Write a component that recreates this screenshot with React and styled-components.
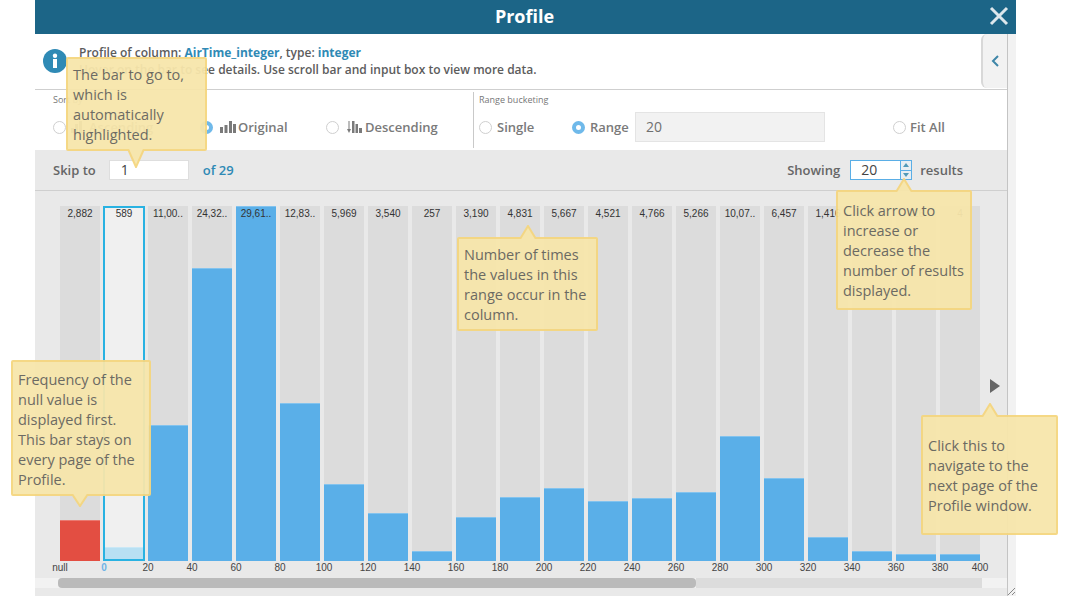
import React from 'react'
import styled, { createGlobalStyle } from 'styled-components'

const GlobalStyle = createGlobalStyle`
  html, body {
    margin: 0;
    padding: 0;
    background: #fff;
    overflow: hidden;
  }
  body {
    font-family: "Open Sans", "Liberation Sans", sans-serif;
    color: #666;
  }
`

const Page = styled.div`
  position: relative;
  width: 1070px;
  height: 596px;
  overflow: hidden;
`

const Dialog = styled.div`
  width: 981px;
  margin-left: 35px;
  height: 596px;
  display: flex;
  flex-direction: column;
  background: #f2f2f2;
`

const Header = styled.header`
  position: relative;
  flex: none;
  height: 34px;
  box-sizing: border-box;
  padding: 0 2px 2px 0;
  background: #1c6587;
  color: #fff;
  display: flex;
  align-items: center;
  justify-content: center;
  font-size: 18px;
  font-weight: 700;
`

const CloseButton = styled.button`
  position: absolute;
  right: 7px;
  top: 6px;
  width: 20px;
  height: 20px;
  padding: 0;
  border: 0;
  background: none;
  display: flex;
`

const Content = styled.main`
  flex: 1;
  width: 973px;
  box-sizing: border-box;
  border-right: 1px solid #c4c4c4;
  display: flex;
  flex-direction: column;
  background: #e9e9e9;
  position: relative;
`

const InfoRow = styled.section`
  position: relative;
  flex: none;
  height: 56px;
  box-sizing: border-box;
  border-bottom: 1px solid #cfcfcf;
  background: #fff;
  display: flex;
  align-items: center;
  padding: 0 0 2px 8px;
`

const InfoBadge = styled.svg`
  flex: none;
  margin-right: 12px;
`

const InfoText = styled.div`
  font-size: 12px;
  line-height: 17px;
  font-weight: 600;
  color: #5c5c5c;
`

const Strong = styled.span`
  color: #2f8ab5;
  font-weight: 700;
`

const CollapseTab = styled.div`
  position: absolute;
  right: 0;
  top: 0;
  width: 26px;
  height: 54px;
  box-sizing: border-box;
  background: #f2f2f2;
  border-left: 2px solid #d8d8d8;
  border-radius: 6px 0 0 6px;
  display: flex;
  align-items: center;
  justify-content: center;
`

const OptionsRow = styled.section`
  flex: none;
  height: 60px;
  box-sizing: border-box;
  background: #fff;
  display: flex;
  padding: 2px 0 2px 18px;
`

const SortGroup = styled.div`
  width: 421px;
  box-sizing: border-box;
  border-right: 1px solid #c9c9c9;
`

const RangeGroup = styled.div`
  padding-left: 5px;
`

const GroupLabel = styled.div`
  font-size: 9px;
  line-height: 12px;
  height: 17px;
  padding-top: 2px;
  box-sizing: border-box;
  color: #777;
`

const OptionLine = styled.div`
  display: flex;
  align-items: center;
  height: 30px;
  margin-top: 3px;
`

const RadioItem = styled.label`
  display: flex;
  align-items: center;
  width: ${p => p.$width}px;
  font-size: 13px;
  font-weight: 600;
  color: #7a7a7a;
`

const Radio = styled.span`
  flex: none;
  width: 13px;
  height: 13px;
  box-sizing: border-box;
  border-radius: 50%;
  background: #fff;
  border: ${p => (p.$on ? '4px solid #6fb9ea' : '1px solid #cfcfcf')};
  margin-right: ${p => p.$gap || 5}px;
`

const BarsIcon = styled.svg`
  flex: none;
  margin-right: 2px;
`

const RangeInput = styled.div`
  width: 190px;
  height: 30px;
  box-sizing: border-box;
  background: #f2f2f2;
  border: 1px solid #e4e4e4;
  margin: 0 68px 0 6px;
  padding-left: 10px;
  font-size: 14px;
  line-height: 28px;
  color: #707070;
`

const Toolbar = styled.section`
  flex: none;
  height: 41px;
  box-sizing: border-box;
  border-bottom: 1px solid #cfcfcf;
  display: flex;
  align-items: center;
  padding: 0 44px 0 18px;
  font-size: 13px;
  font-weight: 600;
  color: #666;
`

const SkipInput = styled.div`
  width: 80px;
  height: 20px;
  box-sizing: border-box;
  background: #fff;
  border: 1px solid #dedede;
  margin: 0 14px 0 13px;
  padding-left: 11px;
  font-size: 14px;
  font-weight: 400;
  line-height: 18px;
  color: #444;
`

const OfTotal = styled.span`
  color: #2f8ab5;
  flex: 1;
`

const ShowingInput = styled.div`
  width: 62px;
  height: 20px;
  box-sizing: border-box;
  background: #fff;
  border: 1px solid #5aaee6;
  margin: 0 8px 0 10px;
  padding-left: 10px;
  font-size: 14px;
  font-weight: 400;
  line-height: 18px;
  color: #444;
  display: flex;
  justify-content: space-between;
`

const Spinner = styled.div`
  width: 10px;
  border-left: 1px solid #5aaee6;
  display: flex;
  flex-direction: column;
  background: #e8eef2;
`

const SpinButton = styled.div`
  flex: 1;
  display: flex;
  align-items: center;
  justify-content: center;
  & + & {
    border-top: 1px solid #5aaee6;
  }
  &::before {
    content: '';
    border-left: 3.5px solid transparent;
    border-right: 3.5px solid transparent;
    ${p => (p.$down ? 'border-top' : 'border-bottom')}: 4px solid #5199b8;
  }
`

const ChartArea = styled.section`
  flex: none;
  height: 387px;
  box-sizing: border-box;
  padding: 15px 0 0 25px;
  display: flex;
  flex-direction: column;
`

const Plot = styled.div`
  display: flex;
  align-items: center;
  height: 355px;
`

const Columns = styled.div`
  display: flex;
  gap: 4px;
  height: 100%;
`

const Column = styled.div`
  position: relative;
  width: ${p => (p.$selected ? 42 : 40)}px;
  margin: ${p => (p.$selected ? '0 -1px' : '0')};
  box-sizing: border-box;
  background: ${p => (p.$selected ? '#f0f0f0' : '#dcdcdc')};
  border: ${p => (p.$selected ? '2px solid #29b2e2' : '0')};
  display: flex;
  flex-direction: column;
  justify-content: flex-end;
`

// sits on top of the bar, the tallest bar fills the whole column
const Count = styled.div`
  position: absolute;
  left: 0;
  right: 0;
  top: ${p => (p.$selected ? -1 : 1)}px;
  font-family: "Liberation Sans", Arial, sans-serif;
  font-size: 10px;
  line-height: 14px;
  color: #333;
  text-align: center;
  white-space: nowrap;
`

const Fill = styled.div`
  background: ${p => p.$color};
  box-shadow: inset 0 1px 0 rgba(255, 255, 255, 0.25);
`

const NextArrow = styled.div`
  margin: 5px 0 0 10px;
  border-left: 10px solid #666;
  border-top: 7.5px solid transparent;
  border-bottom: 7.5px solid transparent;
`

const Axis = styled.div`
  display: flex;
  margin-left: -22px;
  height: 12px;
  padding-top: 1px;
`

const Tick = styled.div`
  flex: none;
  width: 44px;
  margin-left: ${p => (p.$last ? -4 : 0)}px;
  text-align: center;
  font-family: "Liberation Sans", Arial, sans-serif;
  font-size: 10px;
  line-height: 12px;
  color: ${p => (p.$active ? '#6fb3e6' : '#444')};
  font-weight: ${p => (p.$active ? 700 : 400)};
`

const ScrollRail = styled.div`
  flex: none;
  height: 10px;
  background: #f2f2f2;
  display: flex;
`

const ScrollStart = styled.div`
  width: 23px;
`

const ScrollThumb = styled.div`
  width: 638px;
  background: #bababa;
  border-radius: 4px;
`

const ScrollRest = styled.div`
  width: 286px;
  background: #dcdcdc;
`

const Tooltip = styled.div`
  position: absolute;
  left: ${p => p.$x}px;
  top: ${p => p.$y}px;
  width: ${p => p.$w}px;
  height: ${p => p.$h}px;
  box-sizing: border-box;
  padding: ${p => p.$pad || '6px 5px'};
  background: #f7e6ab;
  border: 2px solid #f5d67f;
  border-radius: 2px;
  opacity: 0.95;
  font-size: 14.5px;
  line-height: 20px;
  color: #66645c;
  white-space: nowrap;
`

const Caret = styled.svg`
  position: absolute;
  left: ${p => p.$x}px;
  ${p => (p.$down ? `bottom: ${-p.$size}px;` : `top: ${-p.$size}px;`)}
  transform: ${p => (p.$down ? 'scaleY(-1)' : 'none')};
`

const ResizeGrip = styled.svg`
  position: absolute;
  left: 1007px;
  top: 587px;
`

const bars = [
  { count: '2,882', height: 41, color: '#e34e42' },
  { count: '589', height: 12, color: '#b8e0f3', selected: true },
  { count: '11,00..', height: 136 },
  { count: '24,32..', height: 293 },
  { count: '29,61..', height: 355 },
  { count: '12,83..', height: 158 },
  { count: '5,969', height: 77 },
  { count: '3,540', height: 48 },
  { count: '257', height: 10 },
  { count: '3,190', height: 44 },
  { count: '4,831', height: 64 },
  { count: '5,667', height: 73 },
  { count: '4,521', height: 60 },
  { count: '4,766', height: 63 },
  { count: '5,266', height: 69 },
  { count: '10,07..', height: 125 },
  { count: '6,457', height: 83 },
  { count: '1,416', height: 24 },
  { count: '257', height: 10 },
  { count: '126', height: 7 },
  { count: '4', height: 7 },
]

const ticks = ['null', '0']
for (let v = 20; v <= 400; v += 20) ticks.push(String(v))

const tooltips = [
  { x: 66, y: 57, w: 141, h: 94, caret: 59, size: 19, down: true, text: ['The bar to go to,', 'which is', 'automatically', 'highlighted.'] },
  { x: 457, y: 237, w: 141, h: 94, caret: 60, size: 14, text: ['Number of times', 'the values in this', 'range occur in the', 'column.'] },
  { x: 836, y: 190, w: 136, h: 120, caret: 57, size: 14, pad: '9px 5px', text: ['Click arrow to', 'increase or', 'decrease the', 'number of results', 'displayed.'] },
  { x: 921, y: 415, w: 137, h: 120, caret: 58, size: 14, pad: '19px 5px', text: ['Click this to', 'navigate to the', 'next page of the', 'Profile window.'] },
  { x: 11, y: 360, w: 140, h: 136, caret: 58, size: 13, down: true, pad: '8px 5px', text: ['Frequency of the', 'null value is', 'displayed first.', 'This bar stays on', 'every page of the', 'Profile.'] },
]

const OriginalIcon = () => (
  <BarsIcon width="16" height="12" viewBox="0 0 16 12" fill="#7a7a7a">
    <rect x="0" y="6" width="3" height="6" />
    <rect x="4.5" y="4" width="3" height="8" />
    <rect x="9" y="0" width="3" height="12" />
    <rect x="13" y="3" width="3" height="9" />
  </BarsIcon>
)

const DescendingIcon = () => (
  <BarsIcon width="16" height="12" viewBox="0 0 16 12" fill="#7a7a7a">
    <path d="M1.5 0h1v8h1.5L2 12 0 8h1.5z" />
    <rect x="5" y="0" width="2.5" height="12" />
    <rect x="8.5" y="3" width="2.5" height="9" />
    <rect x="12" y="7" width="3" height="5" />
  </BarsIcon>
)

const AscendingIcon = () => (
  <BarsIcon width="16" height="12" viewBox="0 0 16 12" fill="#7a7a7a">
    <rect x="0" y="7" width="3" height="5" />
    <rect x="4" y="3" width="3" height="9" />
    <rect x="8" y="0" width="3" height="12" />
  </BarsIcon>
)

const App = () => (
  <Page>
    <GlobalStyle />
    <Dialog>
      <Header>
        Profile
        <CloseButton aria-label="Close">
          <svg width="20" height="20" viewBox="0 0 20 20">
            <path d="M2 2l16 16M18 2L2 18" stroke="#dde7ec" strokeWidth="3" fill="none" />
          </svg>
        </CloseButton>
      </Header>
      <Content>
        <InfoRow>
          <InfoBadge width="24" height="24" viewBox="0 0 24 24">
            <circle cx="12" cy="12" r="12" fill="#2f8ab5" />
            <rect x="10" y="10" width="4" height="9" fill="#fff" />
            <circle cx="12" cy="6.8" r="2.2" fill="#fff" />
          </InfoBadge>
          <InfoText>
            <div>
              Profile of column: <Strong>AirTime_integer</Strong>, type: <Strong>integer</Strong>
            </div>
            <div>Hover on the bar to see details. Use scroll bar and input box to view more data.</div>
          </InfoText>
          <CollapseTab>
            <svg width="9" height="14" viewBox="0 0 9 14">
              <path d="M7 2L2 7l5 5" stroke="#3f86a8" strokeWidth="2" fill="none" />
            </svg>
          </CollapseTab>
        </InfoRow>
        <OptionsRow>
          <SortGroup>
            <GroupLabel>Sort by</GroupLabel>
            <OptionLine>
              <RadioItem $width={147}>
                <Radio />
                <AscendingIcon />
                Ascending
              </RadioItem>
              <RadioItem $width={126}>
                <Radio $on $gap={7} />
                <OriginalIcon />
                Original
              </RadioItem>
              <RadioItem $width={120}>
                <Radio $gap={8} />
                <DescendingIcon />
                Descending
              </RadioItem>
            </OptionLine>
          </SortGroup>
          <RangeGroup>
            <GroupLabel>Range bucketing</GroupLabel>
            <OptionLine>
              <RadioItem $width={93}>
                <Radio />
                Single
              </RadioItem>
              <RadioItem $width={57}>
                <Radio $on />
                Range
              </RadioItem>
              <RangeInput>20</RangeInput>
              <RadioItem $width={60}>
                <Radio $gap={4} />
                Fit All
              </RadioItem>
            </OptionLine>
          </RangeGroup>
        </OptionsRow>
        <Toolbar>
          <span>Skip to</span>
          <SkipInput>1</SkipInput>
          <OfTotal>of 29</OfTotal>
          <span>Showing</span>
          <ShowingInput>
            20
            <Spinner>
              <SpinButton />
              <SpinButton $down />
            </Spinner>
          </ShowingInput>
          <span>results</span>
        </Toolbar>
        <ChartArea>
          <Plot>
            <Columns>
              {bars.map((bar, i) => (
                <Column key={i} $selected={bar.selected}>
                  <Count $selected={bar.selected}>{bar.count}</Count>
                  <Fill $color={bar.color || '#5aafe8'} style={{ height: bar.height }} />
                </Column>
              ))}
            </Columns>
            <NextArrow />
          </Plot>
          <Axis>
            {ticks.map((t, i) => (
              <Tick key={t} $active={t === '0'} $last={i === ticks.length - 1}>
                {t}
              </Tick>
            ))}
          </Axis>
        </ChartArea>
        <ScrollRail>
          <ScrollStart />
          <ScrollThumb />
          <ScrollRest />
        </ScrollRail>
      </Content>
    </Dialog>
    {tooltips.map(tip => (
      <Tooltip key={tip.x} $x={tip.x} $y={tip.y} $w={tip.w} $h={tip.h} $pad={tip.pad}>
        {tip.text.map(line => (
          <div key={line}>{line}</div>
        ))}
        <Caret
          $x={tip.caret}
          $down={tip.down}
          $size={tip.size}
          width="18"
          height={tip.size}
          viewBox={`0 0 18 ${tip.size}`}
        >
          <path d={`M1 ${tip.size}L9 1l8 ${tip.size - 1}`} fill="#f7e6ab" stroke="#f5d67f" strokeWidth="2" />
        </Caret>
      </Tooltip>
    ))}
    <ResizeGrip width="9" height="9" viewBox="0 0 9 9">
      <path d="M1 8l7-7M5 8l3-3" stroke="#888" strokeWidth="1" fill="none" />
    </ResizeGrip>
  </Page>
)

export default App
